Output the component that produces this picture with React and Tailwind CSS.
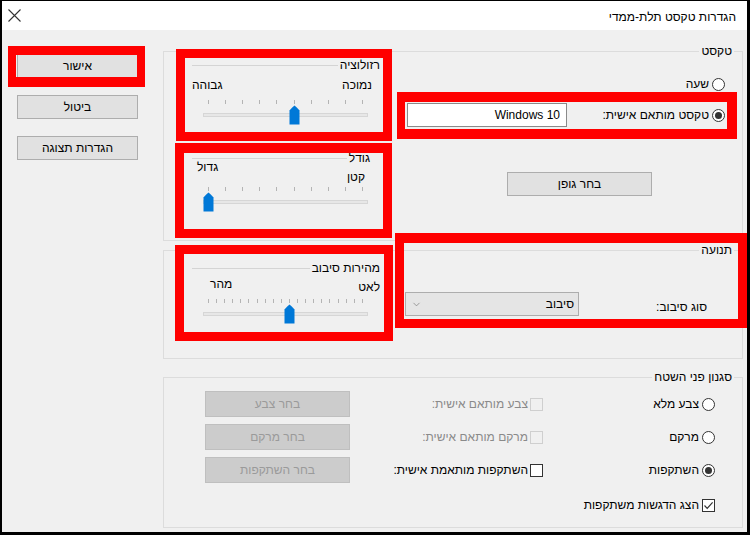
import React from 'react';
import { ChevronDown } from 'lucide-react';

const Radio = ({ checked }) => (
  <span className="w-[13px] h-[13px] rounded-full border border-[#333] bg-white flex items-center justify-center shrink-0">
    {checked && <span className="w-[7px] h-[7px] rounded-full bg-[#333]" />}
  </span>
);

const Check = ({ checked, disabled }) => (
  <span
    className={`w-[13px] h-[13px] border flex items-center justify-center shrink-0 ${
      disabled ? 'border-[#cfcfcf] bg-[#f0f0f0]' : 'border-[#333] bg-white'
    }`}
  >
    {checked && (
      <svg width="11" height="11" viewBox="0 0 11 11">
        <path d="M1.5 5.5 L4.2 8.3 L9.6 2.4" fill="none" stroke="#333" strokeWidth="1.2" />
      </svg>
    )}
  </span>
);

const Btn = ({ children, className = '', disabled }) => (
  <button
    className={`flex items-center justify-center border shrink-0 ${
      disabled ? 'bg-[#cccccc] border-[#bfbfbf] text-[#9a9a9a]' : 'bg-[#e1e1e1] border-[#adadad] text-black'
    } ${className}`}
  >
    {children}
  </button>
);

// win-style group box, legend sits on the top border
const Group = ({ title, className = '', children }) => (
  <fieldset dir="rtl" className={`w-[580px] border border-[#dcdcdc] ${className}`}>
    <legend className="mr-[8px] px-[2px] leading-[14px]">{title}</legend>
    <div dir="ltr" className="flex">{children}</div>
  </fieldset>
);

const Thumb = ({ left }) => (
  <svg className="absolute top-[5px]" style={{ left }} width="11" height="20" viewBox="0 0 11 20">
    <path d="M5.5 0.5 Q8 2.5 10.5 5.5 V19.5 H0.5 V5.5 Q3 2.5 5.5 0.5 Z" fill="#0078d7" />
  </svg>
);

const SliderPanel = ({ title, titleCls, rowCls, leftLabel, leftCls, rightLabel, rightCls, ticks, value, className = '' }) => {
  const step = 154 / (ticks - 1);
  return (
    <div className={`w-[198px] flex flex-col ${className}`}>
      <div className={`flex items-center h-[14px] ${titleCls}`}>
        <div className="flex-1 ml-[7px] mr-[2px] border-t border-[#d4d4d4]" />
        <span>{title}</span>
      </div>
      <div className={`flex justify-between items-start ${rowCls}`}>
        <span className={leftCls}>{leftLabel}</span>
        <span className={rightCls}>{rightLabel}</span>
      </div>
      <div className="relative h-[25px]">
        <div className="flex justify-between ml-[23px] w-[155px] h-[5px]">
          {Array.from({ length: ticks }).map((_, i) => (
            <span key={i} className="w-px h-[4px] bg-[#b4b4b4]" />
          ))}
        </div>
        <div className="ml-[18px] w-[165px] h-[4px] mt-[8px] bg-[#e7e7e7] border border-[#d6d6d6]" />
        <Thumb left={23 + value * step - 5} />
      </div>
    </div>
  );
};

const frames = [
  'left-[6px] top-[45px] w-[137px] h-[41px] border-t-[9px] border-b-[10px] border-x-[8px]',
  'left-[174px] top-[48px] w-[216px] h-[92px] border-[9px]',
  'left-[173px] top-[142px] w-[217px] h-[95px] border-[9px] border-t-[10px]',
  'left-[173px] top-[244px] w-[218px] h-[96px] border-[9px]',
  'left-[395px] top-[91px] w-[340px] h-[47px] border-l-[8px] border-r-[10px] border-y-[10px]',
  'left-[393px] top-[232px] w-[352px] h-[95px] border-[9px] border-t-[10px]',
];

const surfaceRows = [
  { radio: 'צבע מלא', check: 'צבע מותאם אישית:', btn: 'בחר צבע', checkOff: true },
  { radio: 'מרקם', check: 'מרקם מותאם אישית:', btn: 'בחר מרקם', checkOff: true },
  { radio: 'השתקפות', check: 'השתקפות מותאמת אישית:', btn: 'בחר השתקפות', checked: true },
];

export default function App() {
  return (
    <div className="relative w-[750px] h-[535px] border-l-2 border-t border-r-[3px] border-b-[3px] border-black bg-[#f0f0f0] text-[12px] leading-[14px] text-black font-['Liberation_Sans',Arial,sans-serif] overflow-hidden">
      {/* title bar */}
      <div className="h-[29px] bg-white flex items-center justify-between">
        <svg className="ml-[6px]" width="13" height="13" viewBox="0 0 13 13">
          <path d="M0.5 0.5 L12.5 12.5 M12.5 0.5 L0.5 12.5" stroke="#333" strokeWidth="1.1" />
        </svg>
        <span dir="rtl" className="mr-[11px] mt-[2px]">הגדרות טקסט תלת-ממדי</span>
      </div>

      <div className="flex">
        {/* buttons column */}
        <div className="w-[161px] flex flex-col pl-[15px] pt-[24px] gap-[17px]">
          <Btn className="w-[121px] h-[24px]">אישור</Btn>
          <Btn className="w-[121px] h-[24px]">ביטול</Btn>
          <Btn className="w-[121px] h-[24px]">הגדרות תצוגה</Btn>
        </div>

        <div className="flex flex-col">
          <Group title="טקסט" className="mt-[14px] h-[197px]">
            <div className="ml-[21px] flex flex-col">
              <SliderPanel
                title="רזולוציה"
                titleCls="pr-[3px]"
                rowCls="h-[28px]"
                leftLabel="גבוהה"
                leftCls="ml-[7px] mt-[6px]"
                rightLabel="נמוכה"
                rightCls="mr-[11px] mt-[6px]"
                ticks={10}
                value={5}
                className="mb-[26px]"
              />
              <SliderPanel
                title="גודל"
                titleCls="pr-[13px]"
                rowCls="h-[22px]"
                leftLabel="גדול"
                leftCls="ml-[12px] -mt-[5px]"
                rightLabel="קטן"
                rightCls="mr-[18px] mt-[5px]"
                ticks={10}
                value={0}
              />
            </div>
            <div className="ml-[24px] w-[318px] flex flex-col">
              <div dir="rtl" className="mt-[19px] h-[14px] flex items-center gap-[3px]">
                <Radio />
                <span>שעה</span>
              </div>
              <div dir="rtl" className="mt-[12px] h-[24px] flex items-center gap-[3px]">
                <Radio checked />
                <span>טקסט מותאם אישית:</span>
                <input
                  readOnly
                  value="Windows 10"
                  dir="ltr"
                  className="mr-auto w-[160px] h-[24px] border border-[#8a8a8a] bg-white text-right pr-[6px] outline-none"
                />
              </div>
              <Btn className="self-start ml-[100px] mt-[45px] w-[145px] h-[24px]">בחר גופן</Btn>
            </div>
          </Group>

          <Group title="תנועה" className="mt-[2px] h-[116px]">
            <SliderPanel
              title="מהירות סיבוב"
              titleCls="pr-[3px]"
              rowCls="h-[24px]"
              leftLabel="מהר"
              leftCls="ml-[25px] mt-[2px]"
              rightLabel="לאט"
              rightCls="mr-[3px] mt-[5px]"
              ticks={20}
              value={10}
              className="ml-[21px] mt-[4px]"
            />
            <div dir="rtl" className="ml-[22px] w-[302px] mt-[35px] h-[24px] flex items-start">
              <span className="mt-[8px]">סוג סיבוב:</span>
              <div className="mr-auto w-[174px] h-[24px] border border-[#adadad] bg-[#e5e5e5] flex items-center justify-between pr-[4px] pl-[5px]">
                <span>סיבוב</span>
                <ChevronDown size={11} strokeWidth={1.5} color="#777" />
              </div>
            </div>
          </Group>

          <Group title="סגנון פני השטח" className="mt-[11px] h-[158px]">
            <div dir="rtl" className="flex-1 flex flex-col pr-[27px] pt-[7px] gap-[7px]">
              {surfaceRows.map((r) => (
                <div key={r.radio} className="flex items-center h-[26px]">
                  <div className="w-[172px] flex items-center gap-[3px]">
                    <Radio checked={r.checked} />
                    <span>{r.radio}</span>
                  </div>
                  <div className={`w-[193px] flex items-center gap-[2px] ${r.checkOff ? 'text-[#8a8a8a]' : 'text-black'}`}>
                    <Check disabled={r.checkOff} />
                    <span>{r.check}</span>
                  </div>
                  <Btn disabled className="w-[145px] h-[26px]">{r.btn}</Btn>
                </div>
              ))}
              <div className="flex items-center gap-[3px] h-[14px] mt-[8px]">
                <Check checked />
                <span>הצג הדגשות משתקפות</span>
              </div>
            </div>
          </Group>
        </div>
      </div>

      {/* red highlight frames over the dialog */}
      {frames.map((f) => (
        <div key={f} className={`absolute border-[#ff0000] pointer-events-none ${f}`} />
      ))}
    </div>
  );
}
